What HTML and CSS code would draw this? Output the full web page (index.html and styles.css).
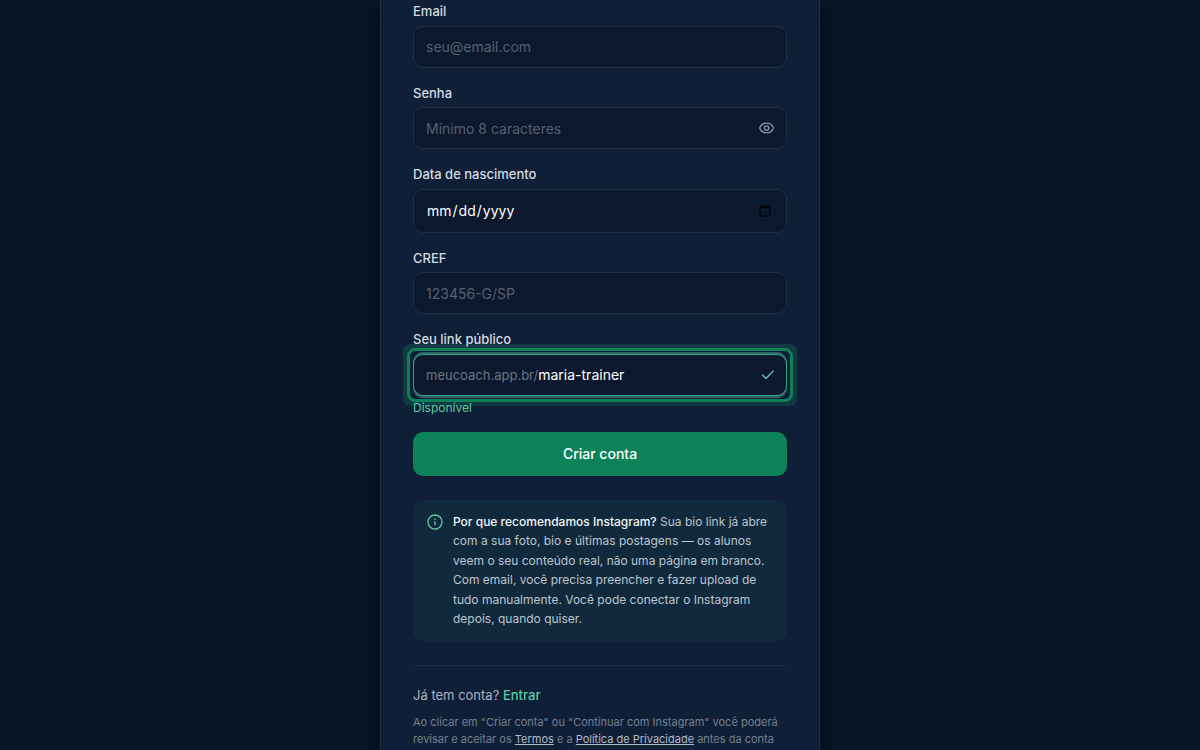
FILE: index.html
```html
<!DOCTYPE html>
<html lang="pt-BR">
<head>
    <meta charset="UTF-8">
    <meta name="viewport" content="width=device-width, initial-scale=1.0">
    <title>Criar conta</title>
    <link rel="stylesheet" href="styles.css">
</head>
<body>

    <main class="card">
        <form class="signup-form">
            <div class="form-group">
                <label for="email">Email</label>
                <input class="field" type="email" id="email" name="email" placeholder="seu@email.com">
            </div>
            <div class="form-group">
                <label for="senha">Senha</label>
                <div class="field field-group">
                    <input type="password" id="senha" name="senha" placeholder="Mínimo 8 caracteres">
                    <button type="button" class="toggle-password" aria-label="Mostrar senha">
                        <svg width="16" height="16" viewBox="0 0 16 16" fill="none" stroke="currentColor" stroke-width="1.3" stroke-linejoin="round">
                            <path d="M1.6 8C2.8 4.8 5.4 3.1 8.6 3.1S14.4 4.8 15.5 8C14.4 11.2 11.8 12.9 8.6 12.9S2.8 11.2 1.6 8z"/>
                            <circle cx="8.6" cy="8" r="2.2"/>
                        </svg>
                    </button>
                </div>
            </div>
            <div class="form-group">
                <label for="nascimento">Data de nascimento</label>
                <input class="field field-date" type="date" id="nascimento" name="nascimento">
            </div>
            <div class="form-group">
                <label for="cref">CREF</label>
                <input class="field" type="text" id="cref" name="cref" placeholder="123456-G/SP">
            </div>
            <div class="form-group">
                <label for="link">Seu link público</label>
                <div class="focus-ring">
                    <div class="field field-group field-active">
                        <span class="prefix">meucoach.app.br/</span>
                        <input type="text" id="link" name="link" value="maria-trainer">
                        <svg class="check" width="16" height="16" viewBox="0 0 16 16" fill="none" stroke="currentColor" stroke-width="1.3" stroke-linecap="round" stroke-linejoin="round">
                            <path d="M4.5 8L8 11.5L15.2 4"/>
                        </svg>
                    </div>
                </div>
                <p class="hint">Disponível</p>
            </div>
            <button type="submit" class="btn">Criar conta</button>
        </form>

        <!-- Instagram info -->
        <div class="info">
            <svg class="info-icon" width="16" height="16" viewBox="0 0 16 16" fill="none" stroke="currentColor" stroke-width="1.3">
                <circle cx="8" cy="8" r="7"/>
                <path d="M8 7.2V11.3M8 4.6V5.9"/>
            </svg>
            <p><strong>Por que recomendamos Instagram?</strong> Sua bio link já abre com a sua foto, bio e últimas postagens — os alunos veem o seu conteúdo real, não uma página em branco. Com email, você precisa preencher e fazer upload de tudo manualmente. Você pode conectar o Instagram depois, quando quiser.</p>
        </div>

        <footer class="card-footer">
            <p class="login">Já tem conta? <a href="#">Entrar</a></p>
            <p class="legal">Ao clicar em "Criar conta" ou "Continuar com Instagram" você poderá revisar e aceitar os <a href="#">Termos</a> e a <a href="#">Política de Privacidade</a> antes da conta</p>
        </footer>
    </main>

</body>
</html>
```

FILE: styles.css
```css
:root {
    --bg: #091527;
    --card: #0f1f37;
    --field: #0c182d;
    --line: #202e42;
    --green: #0d8259;
    --mint: #5ccba2;
}
* {
    box-sizing: border-box;
}
body {
    margin: 0;
    overflow: hidden;
    background-color: var(--bg);
    color: #fff;
    font-family: Inter, sans-serif;
    font-size: 14px;
}
p {
    margin: 0;
}
.card {
    max-width: 440px;
    margin: 0 auto;
    padding: 2px 32px 32px;
    background-color: var(--card);
    border: 1px solid var(--line);
    border-width: 0 1px;
    box-shadow: 0 0 40px rgba(0, 0, 0, 0.35);
}
.signup-form {
    display: flex;
    flex-direction: column;
    gap: 16px;
}
.form-group {
    display: flex;
    flex-direction: column;
}
/* labels stay above the focus halo */
.form-group label {
    z-index: 1;
    margin-bottom: 4px;
    color: #d5dae0;
    font-size: 13px;
    font-weight: 500;
    line-height: 1.5;
}
.field {
    width: 100%;
    height: 42px;
    padding: 0 12px;
    background-color: var(--field);
    border: 1px solid var(--line);
    border-radius: 10px;
    color: #fff;
    font-family: inherit;
    font-size: 14px;
    outline: none;
}
.field-date {
    height: 44px;
}
.field-group {
    display: flex;
    align-items: center;
}
.field-group input {
    flex: 1;
    min-width: 0;
    padding: 0;
    background: none;
    border: none;
    color: #fff;
    font-family: inherit;
    font-size: 14px;
    outline: none;
}
input::placeholder {
    color: #566070;
    opacity: 1;
}
.toggle-password {
    display: flex;
    padding: 0;
    background: none;
    border: none;
    color: #8b98a8;
    cursor: pointer;
}
.focus-ring {
    border-radius: 2px;
    outline: 3px solid var(--green);
    outline-offset: 3px;
    box-shadow: 0 0 0 4px var(--card), 0 0 0 10px #123a42;
}
.field-active {
    border-color: #2fa880;
    box-shadow: 0 -2px 0 #35626a, 0 2px 0 #35626a;
}
.prefix {
    color: #6b7583;
    font-size: 13px;
}
.check {
    color: var(--mint);
}
.hint {
    margin-top: 4px;
    color: var(--mint);
    font-size: 12px;
    line-height: 16px;
}
.btn {
    height: 44px;
    background-color: var(--green);
    border: none;
    border-radius: 10px;
    color: #fff;
    font-family: inherit;
    font-size: 14px;
    font-weight: 500;
    cursor: pointer;
}
.info {
    display: flex;
    gap: 10px;
    margin-top: 24px;
    padding: 12px 14px;
    background-color: #11293d;
    border-radius: 10px;
    color: #bcc5ce;
    font-size: 12px;
    line-height: 1.625;
}
.info strong {
    color: #f2f5f7;
    font-weight: 500;
}
.info-icon {
    flex-shrink: 0;
    margin-top: 2px;
    color: var(--mint);
}
.card-footer {
    margin-top: 24px;
    padding-top: 20px;
    border-top: 1px solid var(--line);
}
.login {
    color: #aab3be;
    font-size: 13px;
    line-height: 18px;
}
.login a {
    color: var(--mint);
    font-weight: 500;
    text-decoration: none;
}
.legal {
    margin-top: 10px;
    color: #74808f;
    font-size: 11px;
    line-height: 17px;
}
.legal a {
    color: #b4bcc6;
}
```
